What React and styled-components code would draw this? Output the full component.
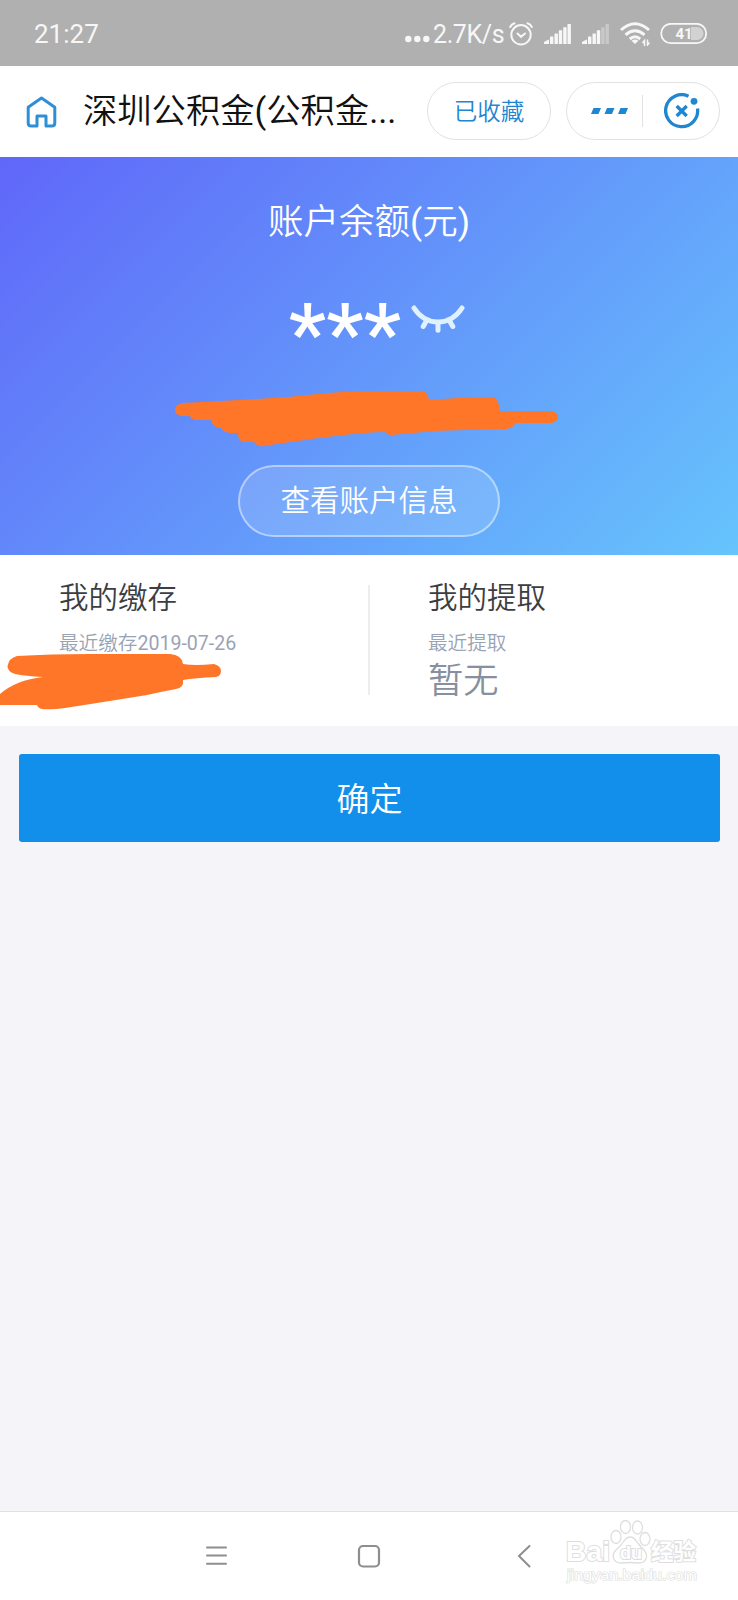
import styled, { createGlobalStyle } from "styled-components";

const GlobalStyle = createGlobalStyle`
  * {
    box-sizing: border-box;
  }
  body {
    margin: 0;
    background: #f4f4f9;
    font-family: Roboto, "Noto Sans CJK SC", sans-serif;
    font-weight: 350;
  }
`;

const Page = styled.div`
  display: flex;
  flex-direction: column;
  width: 738px;
  height: 1600px;
  overflow: hidden;
  background: #f4f4f9;
`;

// 숫자, 괄호
const Latin = styled.span`
  font-weight: 400;
`;

// status bar
const StatusBar = styled.header`
  display: flex;
  align-items: center;
  justify-content: space-between;
  height: 66px;
  padding: 2px 30px 0 34px;
  background: #b0b0b0;
  color: #f7f7f7;
  font-size: 26px;
  font-weight: 400;
`;

const StatusIcons = styled.div`
  display: flex;
  align-items: center;
`;

const Speed = styled.span`
  width: 72px;
  margin-left: 3px;
  font-size: 25px;
  letter-spacing: -0.4px;
  white-space: nowrap;
`;

const StatusSvg = styled.svg`
  display: block;
  flex: none;
  margin-left: ${(props) => props.$gap || 0}px;
`;

// title bar
const TitleBar = styled.div`
  display: flex;
  align-items: center;
  height: 91px;
  padding: 0 18px 0 26px;
  background: #ffffff;
`;

const Title = styled.h1`
  width: 344px;
  margin: 0 0 1px 26px;
  color: #111111;
  font-size: 34.3px;
  font-weight: 350;
  line-height: 50px;
  white-space: nowrap;
`;

const SavedButton = styled.button`
  width: 124px;
  height: 58px;
  margin-bottom: 2px;
  padding: 0 0 1px;
  border: 1px solid #e2e2e2;
  border-radius: 29px;
  background: #ffffff;
  color: #1f86d0;
  font-family: inherit;
  font-size: 23.5px;
  font-weight: 350;
`;

const Capsule = styled.div`
  display: flex;
  align-items: center;
  width: 154px;
  height: 58px;
  margin: 0 0 2px 15px;
  border: 1px solid #e2e2e2;
  border-radius: 29px;
`;

const CapsuleItem = styled.div`
  display: flex;
  align-items: center;
  height: 32px;
  padding-left: ${(props) => props.$left}px;
  width: ${(props) => props.$width}px;
  border-right: ${(props) => (props.$divided ? "1px solid #e2e2e2" : "none")};
`;

// balance
const Hero = styled.section`
  display: flex;
  flex-direction: column;
  align-items: center;
  height: 398px;
  padding-top: 40px;
  background: linear-gradient(135deg, #6067f9 0%, #66c4fc 100%);
  color: #ffffff;
`;

const HeroTitle = styled.div`
  font-size: 35.5px;
  line-height: 50px;
`;

const Balance = styled.div`
  display: flex;
  align-items: center;
  height: 70px;
  margin-top: 37px;
  padding-left: 16px;
`;

const Stars = styled.span`
  height: 70px;
  font-size: 84px;
  font-weight: 500;
  letter-spacing: 0.3px;
  line-height: 99px;
`;

const EyeSvg = styled.svg`
  margin-left: 10px;
`;

const Scribble = styled.svg`
  display: block;
  margin-top: ${(props) => props.$top}px;
  margin-right: ${(props) => props.$right || 0}px;
`;

const InfoButton = styled.button`
  width: 262px;
  height: 72px;
  margin-top: 17px;
  padding: 0 0 6px;
  border: 2px solid rgba(255, 255, 255, 0.45);
  border-radius: 36px;
  background: rgba(255, 255, 255, 0.14);
  color: #ffffff;
  font-family: inherit;
  font-size: 29.5px;
  font-weight: 350;
`;

// records
const Records = styled.section`
  display: flex;
  height: 171px;
  padding: 30px 0 31px;
  background: #ffffff;
`;

const Record = styled.div`
  flex: 1;
  height: 110px;
  border-left: ${(props) => (props.$divided ? "2px solid #ededf0" : "none")};
`;

const RecordTitle = styled.div`
  margin-top: -9px;
  padding-left: ${(props) => props.$left}px;
  color: #3c3e42;
  font-size: 29.5px;
  line-height: 44px;
`;

const RecordDate = styled.div`
  margin-top: 9px;
  padding-left: ${(props) => props.$left}px;
  color: #9aa3b4;
  font-size: 19.6px;
  line-height: 30px;
`;

const RecordValue = styled.div`
  margin-top: -1px;
  padding-left: ${(props) => props.$left}px;
  color: #87909f;
  font-size: 35.3px;
  line-height: 46px;
`;

const ConfirmButton = styled.button`
  height: 88px;
  margin: 28px 18px 0 19px;
  padding: 0 0 2px;
  border: none;
  border-radius: 3px;
  background: #128eeb;
  color: #ffffff;
  font-family: inherit;
  font-size: 33px;
  font-weight: 350;
`;

// system navigation
const NavBar = styled.nav`
  position: relative;
  display: flex;
  align-items: center;
  height: 89px;
  margin-top: auto;
  padding-left: 205px;
  border-top: 1px solid #e0e0e3;
  background: #ffffff;
`;

const NavSvg = styled.svg`
  margin-right: ${(props) => props.$gap || 0}px;
`;

// 내비게이션 바 위 워터마크
const Watermark = styled.div`
  position: absolute;
  top: 6px;
  left: 565px;
  width: 140px;
`;

const WatermarkText = styled.text`
  fill: #ffffff;
  stroke: #dedede;
  stroke-width: ${(props) => props.$stroke || 2}px;
  paint-order: stroke;
  font-family: "Liberation Sans", "Noto Sans CJK SC", sans-serif;
  font-weight: ${(props) => props.$weight || 700};
  font-size: ${(props) => props.$size}px;
`;

const ORANGE = "#ff7628";

function SignalIcon({ gap, active }) {
  return (
    <StatusSvg $gap={gap} width="28" height="22" viewBox="0 0 28 22" fill="#f7f7f7">
      <path d="M0 21v-2q3-2 5-2.500V21z" />
      {[6.5, 11, 15.3, 19.7, 24].map((x, i) => (
        <rect
          key={x}
          x={x - 0.5}
          y={13.5 - i * 3.1}
          width="3.4"
          height={7.5 + i * 3.1}
          rx="0.5"
          opacity={i < active ? 1 : 0.35}
        />
      ))}
    </StatusSvg>
  );
}

function App() {
  return (
    <>
      <GlobalStyle />
      <Page>
        <StatusBar>
          <span>21:27</span>
          <StatusIcons>
            <StatusSvg width="25" height="20" viewBox="0 0 25 20" fill="#f7f7f7">
              <circle cx="3.3" cy="15" r="3.2" />
              <circle cx="12.3" cy="15" r="3.2" />
              <circle cx="21.3" cy="15" r="3.2" />
            </StatusSvg>
            <Speed>2.7K/s</Speed>
            <StatusSvg
              $gap={4}
              width="24"
              height="24"
              viewBox="0 0 24 24"
              fill="none"
              stroke="#f7f7f7"
              strokeWidth="2"
              strokeLinecap="round"
            >
              <circle cx="12" cy="12.8" r="9.7" />
              <path d="M8.5 11.5l3.500 3.300 4-3.300M1.200 5Q2.500 2 5.500 1.200M18.500 1.200q3 0.800 4.300 3.800" />
            </StatusSvg>
            <SignalIcon gap={11} active={5} />
            <SignalIcon gap={10} active={3} />
            <StatusSvg
              $gap={10}
              width="30"
              height="24"
              viewBox="0 0 30 24"
              fill="none"
              stroke="#f7f7f7"
              strokeWidth="3"
            >
              <path d="M1 8Q15-4.500 29 8M5.500 12.800q9.500-8 19 0M9.800 17q5.200-4.500 10.400 0" />
              <path d="M11.500 18.800q3.500-2.500 7 0L15 22z" fill="#f7f7f7" stroke="none" />
              <path d="M24.500 24v-5.500l-2 2.500M27.500 17.500V23l2-2.500" strokeWidth="1.5" />
            </StatusSvg>
            <StatusSvg $gap={10} width="48" height="22" viewBox="0 0 48 22">
              <path d="M31 4h6a6.500 6.500 0 0 1 0 13h-6z" fill="#d2d2d2" />
              <rect
                x="1.2"
                y="0.8"
                width="45"
                height="19.3"
                rx="9.6"
                fill="none"
                stroke="#f7f7f7"
                strokeWidth="1.8"
              />
              <text x="15.5" y="15.8" fill="#f7f7f7" fontSize="15" fontWeight="700">
                41
              </text>
            </StatusSvg>
          </StatusIcons>
        </StatusBar>

        <TitleBar>
          <svg
            width="31"
            height="32"
            viewBox="0 0 31 32"
            fill="none"
            stroke="#2f8fd6"
            strokeWidth="3"
            strokeLinejoin="round"
          >
            <path d="M2.200 11.200L15.500 2l13.300 9.200V27q0 3-3 3H20V20h-9v10H5.200q-3 0-3-3z" />
          </svg>
          <Title>
            深圳公积金<Latin>(</Latin>公积金<Latin>...</Latin>
          </Title>
          <SavedButton>已收藏</SavedButton>
          <Capsule>
            <CapsuleItem $left={24} $width={76} $divided>
              <svg width="37" height="6" viewBox="0 0 37 6" fill="#1f86d0">
                <path d="M2.500 0h7.500l-2.500 6H0zM16 0h7.500l-2.500 6h-7.500zM29.500 0h7.500L34.500 6H27z" />
              </svg>
            </CapsuleItem>
            <CapsuleItem $left={21} $width={76}>
              <svg
                width="36"
                height="36"
                viewBox="0 0 36 36"
                fill="none"
                stroke="#1f86d0"
                strokeWidth="3.3"
              >
                <path d="M24.500 3.200A16 16 0 1 0 33.500 15.500" />
                <path d="M12.700 13l10 10M22.700 13l-10 10" />
                <circle cx="30" cy="8.3" r="3.4" fill="#1f86d0" stroke="none" />
              </svg>
            </CapsuleItem>
          </Capsule>
        </TitleBar>

        <Hero>
          <HeroTitle>
            账户余额<Latin>(</Latin>元<Latin>)</Latin>
          </HeroTitle>
          <Balance>
            <Stars>***</Stars>
            <EyeSvg
              width="54"
              height="28"
              viewBox="0 0 54 28"
              fill="none"
              stroke="#e0f1fe"
              strokeWidth="5"
              strokeLinecap="round"
            >
              <path d="M3 3Q12 17 27 17T51 3" />
              <path d="M14.500 17.500l-2.300 4M27 19v6.300M39.500 17.500l2.300 4" />
            </EyeSvg>
          </Balance>
          <Scribble
            $top={36}
            $right={6}
            width="384"
            height="58"
            viewBox="0 0 384 58"
            fill={ORANGE}
          >
            <path d="M8 13Q70 10 115 7Q165 1 200 1L249 1Q254 2 255 10Q290 7 320 7Q325 10 326 21H378Q384 23 384 27T378 33H341Q340 38 332 39Q290 40 260 41Q240 43 218 45Q213 45 211 42Q180 42 90 56Q83 57 80 52H69Q64 51 64 43H56Q49 42 47 38Q38 37 37 30H22Q17 29 16 26H8Q1 25 1 20T8 13Z" />
          </Scribble>
          <InfoButton>查看账户信息</InfoButton>
        </Hero>

        <Records>
          <Record>
            <RecordTitle $left={59}>我的缴存</RecordTitle>
            <RecordDate $left={59}>
              最近缴存<Latin>2019-07-26</Latin>
            </RecordDate>
            <Scribble $top={-5} width="224" height="57" viewBox="0 0 224 57" fill={ORANGE}>
              <path d="M17 2Q50 0 90 0H170Q182 1 183 10Q195 12 214 10Q221 12 221 17T216 23Q195 24 183 26Q184 34 176 35Q160 38 147 41Q110 47 65 54Q52 56 42 55Q38 54 37 51H0V40Q16 26 43 23Q25 22 15 20Q7 17 7.500 12Q9 4 17 2Z" />
            </Scribble>
          </Record>
          <Record $divided>
            <RecordTitle $left={58}>我的提取</RecordTitle>
            <RecordDate $left={58}>最近提取</RecordDate>
            <RecordValue $left={58}>暂无</RecordValue>
          </Record>
        </Records>

        <ConfirmButton>确定</ConfirmButton>

        <NavBar>
          <NavSvg
            $gap={129}
            width="23"
            height="24"
            viewBox="0 0 23 24"
            stroke="#8e8e8e"
            strokeWidth="2"
            strokeLinecap="round"
          >
            <path d="M2 3.500h19M2 11.500h19M2 19.700h19" />
          </NavSvg>
          <NavSvg $gap={136} width="24" height="24" viewBox="0 0 24 24" fill="none">
            <rect x="2" y="2" width="20" height="20.5" rx="4" stroke="#8e8e8e" strokeWidth="2.2" />
          </NavSvg>
          <NavSvg
            width="15"
            height="24"
            viewBox="0 0 15 24"
            fill="none"
            stroke="#8e8e8e"
            strokeWidth="2"
            strokeLinecap="round"
          >
            <path d="M12.500 2L2 12l10.500 10.500" />
          </NavSvg>
          <Watermark>
            <svg width="140" height="70" viewBox="0 0 140 70">
              <WatermarkText x="1" y="43" $size={28} textLength="44">
                Bai
              </WatermarkText>
              <g fill="#ffffff" stroke="#dedede" strokeWidth="1.3">
                <ellipse cx="51" cy="19" rx="5" ry="6.5" />
                <ellipse cx="60.5" cy="9" rx="5" ry="6.5" />
                <ellipse cx="72.5" cy="9.5" rx="5" ry="6.5" />
                <ellipse cx="80" cy="21" rx="5" ry="6.5" />
                <path d="M65 19q4 0 7 5 3 4 7 8c5 6 2 13-5 13q-9-1-18 0c-8 0-10-8-5-13q5-4 8-9 3-4 6-4z" />
              </g>
              <WatermarkText x="55" y="41" $size={18}>
                du
              </WatermarkText>
              <WatermarkText x="86" y="42" $size={22.5}>
                经验
              </WatermarkText>
              <WatermarkText
                x="2"
                y="62"
                $size={14}
                $weight={400}
                $stroke={1.2}
                textLength="130"
                lengthAdjust="spacingAndGlyphs"
              >
                jingyan.baidu.com
              </WatermarkText>
            </svg>
          </Watermark>
        </NavBar>
      </Page>
    </>
  );
}

export default App;
